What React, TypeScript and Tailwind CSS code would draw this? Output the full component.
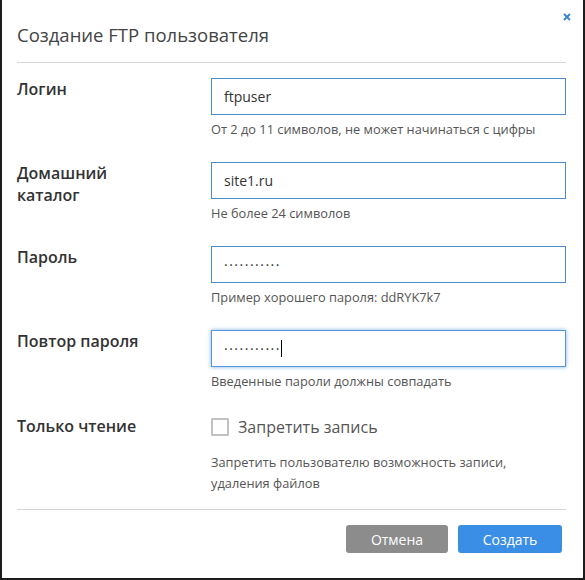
import React from "react";

function Field({
  label,
  help,
  children,
}: {
  label: React.ReactNode;
  help: string;
  children: React.ReactNode;
}) {
  return (
    <div className="flex items-start">
      <div className="w-[194px] shrink-0 text-[16px] leading-[22px] font-semibold text-[#333]">{label}</div>
      <div className="flex-1">
        {children}
        <div className="mt-[5px] text-[12.8px] leading-[18px] text-[#555]">{help}</div>
      </div>
    </div>
  );
}

function Input({ focused, children }: { focused?: boolean; children: React.ReactNode }) {
  return (
    <div
      className={
        focused
          ? "h-[37px] border border-[#5597d8] shadow-[0_0_4px_rgba(74,144,217,0.7)] px-[12px] flex items-center text-[14px] text-[#333]"
          : "h-[37px] border border-[#4b8dcc] px-[12px] flex items-center text-[14px] text-[#333]"
      }
    >
      {children}
    </div>
  );
}

export default function App() {
  return (
    <div className="relative w-[585px] h-[580px] bg-white border-x-2 border-b-2 border-[#1c1c1c] pl-[15px] pr-[17px] font-['Open_Sans',sans-serif] text-[#333]">
      <button className="absolute right-[12px] top-[13px] w-[8px] h-[8px]">
        <svg viewBox="0 0 8 8" className="w-[8px] h-[8px] block">
          <path d="M1 1 L7 7 M7 1 L1 7" stroke="#3d86d6" strokeWidth="2" />
        </svg>
      </button>

      <h1 className="pt-[22px] pb-[14px] border-b border-[#d6d6d6] text-[18.5px] leading-[26px] font-normal text-[#444]">
        Создание FTP пользователя
      </h1>

      <div className="mt-[15px] flex flex-col gap-[24px]">
        <Field label="Логин" help="От 2 до 11 символов, не может начинаться с цифры">
          <Input>ftpuser</Input>
        </Field>
        <Field
          label={
            <>
              Домашний
              <br />
              каталог
            </>
          }
          help="Не более 24 символов"
        >
          <Input>site1.ru</Input>
        </Field>
        <Field label="Пароль" help="Пример хорошего пароля: ddRYK7k7">
          <Input>
            <span className="tracking-[1.5px]">···········</span>
          </Input>
        </Field>
        <Field label="Повтор пароля" help="Введенные пароли должны совпадать">
          <Input focused>
            <span className="tracking-[1.5px]">···········</span>
            <span className="w-px h-[17px] bg-black" />
          </Input>
        </Field>
      </div>

      <div className="mt-[24px] flex items-start">
        <div className="w-[194px] shrink-0 pt-[1px] text-[16px] leading-[22px] font-semibold text-[#333]">
          Только чтение
        </div>
        <div className="flex-1">
          <label className="h-[26px] flex items-center gap-[9px]">
            <span className="w-[18px] h-[18px] border-2 border-[#c2c2c2] bg-white rounded-[1px]" />
            <span className="text-[16px] text-[#555]">Запретить запись</span>
          </label>
          <div className="mt-[12px] text-[12.8px] leading-[21px] text-[#555]">
            Запретить пользователю возможность записи,
            <br />
            удаления файлов
          </div>
        </div>
      </div>

      <div className="mt-[15px] border-t border-[#d6d6d6]" />

      <div className="mt-[15px] flex justify-end gap-[10px] pr-[4px]">
        <button className="w-[102px] h-[28px] rounded-[3px] bg-[#8c8c8c] text-white text-[14px]">Отмена</button>
        <button className="w-[104px] h-[28px] rounded-[3px] bg-[#3a8ee6] text-white text-[14px]">Создать</button>
      </div>
    </div>
  );
}
